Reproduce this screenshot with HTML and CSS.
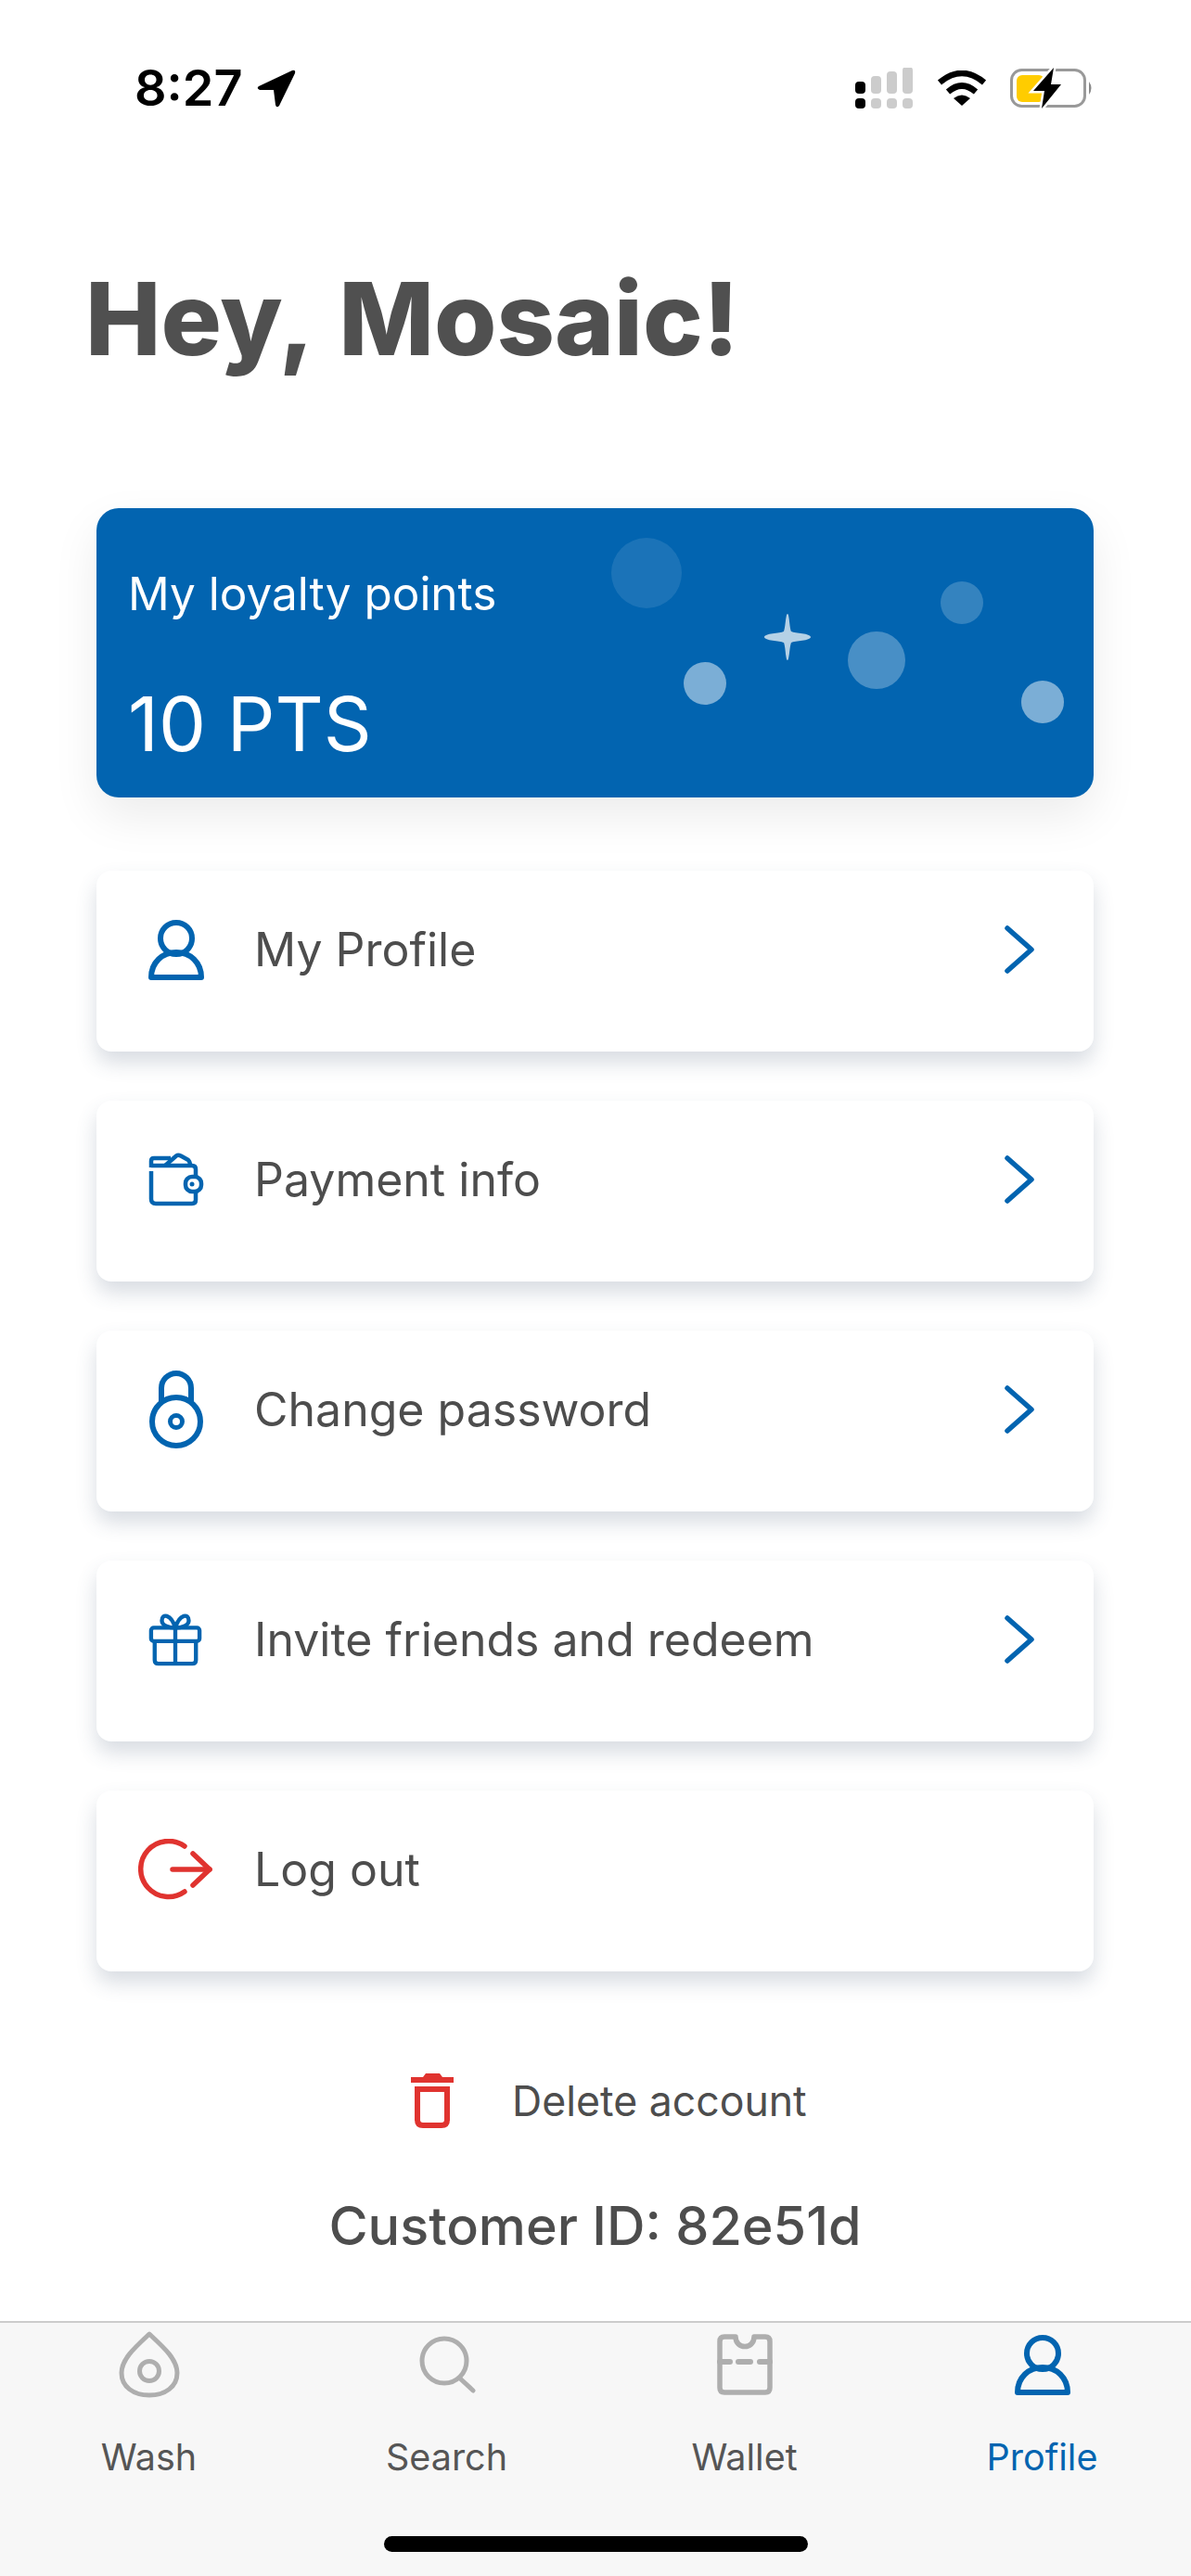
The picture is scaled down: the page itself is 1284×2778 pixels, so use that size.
FILE: index.html
```html
<!DOCTYPE html>
<html lang="en">
<head>
  <meta charset="UTF-8">
  <title>Profile</title>
  <link rel="stylesheet" href="styles.css">
</head>
<body>
  <div class="screen">
    <div class="status-bar">
      <div class="status-left">
        <span class="time">8:27</span>
        <svg class="loc-icon" width="44" height="44" viewBox="0 0 44 44"><path d="M3 20 L39 3 Q43 2 42 6 L25 41 Q22 44 21 40 L19 24 L4 24 Q0 22 3 20 Z" fill="#000"/></svg>
      </div>
      <div class="status-right">
        <svg width="64" height="46" viewBox="0 0 64 46">
          <rect x="1" y="15" width="11" height="13" rx="4" fill="#000"/>
          <rect x="1" y="33" width="11" height="11" rx="4" fill="#000"/>
          <rect x="18" y="9" width="11" height="19" rx="4" fill="#ccc"/>
          <rect x="18" y="33" width="11" height="11" rx="4" fill="#ccc"/>
          <rect x="35" y="4" width="11" height="24" rx="4" fill="#ccc"/>
          <rect x="35" y="33" width="11" height="11" rx="4" fill="#ccc"/>
          <rect x="52" y="-1" width="11" height="29" rx="4" fill="#ccc"/>
          <rect x="52" y="33" width="11" height="11" rx="4" fill="#ccc"/>
        </svg>
        <svg class="wifi-icon" width="54" height="40" viewBox="0 0 54 40" fill="none" stroke="#000" stroke-width="6.500">
          <path d="M3 13 Q27 -7 51 13"/>
          <path d="M12 23 Q27 10 42 23"/>
          <path d="M27 38 L18 30 Q27 23 36 30 Z" fill="#000" stroke="none"/>
        </svg>
        <svg class="battery-icon" width="90" height="46" viewBox="0 0 90 46">
          <rect x="1.500" y="2.500" width="79" height="39" rx="11" fill="none" stroke="#999" stroke-width="3"/>
          <rect x="7" y="8" width="30" height="29" rx="6" fill="#fc0"/>
          <path d="M85 15 Q90 22 85 29 Z" fill="#888"/>
          <path d="M47 0 L25 25 L37 25 L34 44 L55 18 L44 18 Z" fill="#000" stroke="#fff" stroke-width="5" paint-order="stroke"/>
        </svg>
      </div>
    </div>

    <main class="content">
      <h1 class="greeting">Hey, Mosaic!</h1>

      <div class="points-card">
        <svg class="points-art" viewBox="0 0 1075 312">
          <circle cx="593" cy="70" r="38" fill="#fff" fill-opacity="0.1"/>
          <circle cx="656" cy="189" r="23" fill="#fff" fill-opacity="0.48"/>
          <circle cx="841" cy="164" r="31" fill="#fff" fill-opacity="0.28"/>
          <circle cx="933" cy="102" r="23" fill="#fff" fill-opacity="0.2"/>
          <circle cx="1020" cy="209" r="23" fill="#fff" fill-opacity="0.48"/>
          <path d="M745 114 C747 114 747 128 749 133 C753 135 770 135 770 139 C770 143 753 143 749 145 C747 150 747 164 745 164 C743 164 743 150 741 145 C737 143 720 143 720 139 C720 135 737 135 741 133 C743 128 743 114 745 114 Z" fill="#b5d1e6"/>
        </svg>
        <p class="points-label">My loyalty points</p>
        <p class="points-value">10 PTS</p>
      </div>

      <ul class="menu">
        <li class="menu-row">
          <span class="menu-icon">
            <svg width="60" height="66" viewBox="0 0 60 66" fill="none" stroke="#0264b0" stroke-width="6">
              <circle cx="30" cy="21" r="17"/>
              <path d="M3 63 C3 47 15 36 30 36 C45 36 57 47 57 63 Z" stroke-linejoin="round"/>
            </svg>
          </span>
          <span class="menu-text">My Profile</span>
          <svg class="chevron" width="34" height="54" viewBox="0 0 34 54" fill="none" stroke="#0264b0" stroke-width="5.500" stroke-linecap="round" stroke-linejoin="round"><path d="M4 4 L30 27 L4 50"/></svg>
        </li>
        <li class="menu-row">
          <span class="menu-icon">
            <svg width="60" height="58" viewBox="0 0 60 58" fill="none" stroke="#0264b0" stroke-width="4.500" stroke-linejoin="round">
              <path d="M3 20 L3 50 Q3 55 8 55 L47 55 Q51 55 51 51 L51 18 Q51 14 47 14 L3 14"/>
              <path d="M3 16 L3 9 Q3 6 6 6 L24 6"/>
              <path d="M18 14 L30 3.500 Q32 2 35 3.500 L43 8 Q45 10 45 14"/>
              <rect x="40" y="26" width="17" height="16" rx="7" fill="#fff"/>
              <circle cx="47" cy="34" r="2.500" fill="#0264b0" stroke="none"/>
            </svg>
          </span>
          <span class="menu-text">Payment info</span>
          <svg class="chevron" width="34" height="54" viewBox="0 0 34 54" fill="none" stroke="#0264b0" stroke-width="5.500" stroke-linecap="round" stroke-linejoin="round"><path d="M4 4 L30 27 L4 50"/></svg>
        </li>
        <li class="menu-row">
          <span class="menu-icon">
            <svg width="60" height="86" viewBox="0 0 60 86" fill="none" stroke="#0264b0" stroke-width="6">
              <circle cx="30" cy="56" r="26"/>
              <path d="M14 36 L14 20 A16 16 0 0 1 46 20 L46 36"/>
              <circle cx="30" cy="56" r="6.500" stroke-width="5"/>
            </svg>
          </span>
          <span class="menu-text">Change password</span>
          <svg class="chevron" width="34" height="54" viewBox="0 0 34 54" fill="none" stroke="#0264b0" stroke-width="5.500" stroke-linecap="round" stroke-linejoin="round"><path d="M4 4 L30 27 L4 50"/></svg>
        </li>
        <li class="menu-row">
          <span class="menu-icon">
            <svg width="58" height="58" viewBox="0 0 60 60" fill="none" stroke="#0264b0" stroke-width="4.500" stroke-linejoin="round">
              <rect x="3" y="17" width="54" height="15" rx="3"/>
              <path d="M7 32 L7 53 Q7 57 11 57 L49 57 Q53 57 53 53 L53 32"/>
              <path d="M30 17 L30 57"/>
              <path d="M30 17 C24 17 15 15 15 9 C15 1 25 1 30 17 C35 1 45 1 45 9 C45 15 36 17 30 17 Z"/>
            </svg>
          </span>
          <span class="menu-text">Invite friends and redeem</span>
          <svg class="chevron" width="34" height="54" viewBox="0 0 34 54" fill="none" stroke="#0264b0" stroke-width="5.500" stroke-linecap="round" stroke-linejoin="round"><path d="M4 4 L30 27 L4 50"/></svg>
        </li>
        <li class="menu-row">
          <span class="menu-icon">
            <svg class="logout-icon" width="80" height="66" viewBox="0 0 80 66" fill="none" stroke="#e0332f" stroke-width="5.500" stroke-linecap="round" stroke-linejoin="round">
              <path d="M50 8 A30 30 0 1 0 50 57"/>
              <path d="M37 33 L77 33"/>
              <path d="M59 16 L77 33 L59 50"/>
            </svg>
          </span>
          <span class="menu-text">Log out</span>
        </li>
      </ul>

      <div class="delete-row">
        <svg width="46" height="60" viewBox="0 0 46 60" fill="none">
          <path d="M0 4 L13 4 L16 0 L31 0 L34 4 L46 4 L46 10 L0 10 Z" fill="#e0332f"/>
          <path d="M7 17 L39 17 L39 50 Q39 56 33 56 L13 56 Q7 56 7 50 Z" stroke="#e0332f" stroke-width="6"/>
        </svg>
        <span class="delete-text">Delete account</span>
      </div>

      <p class="customer-id">Customer ID: 82e51d</p>
    </main>

    <nav class="tab-bar">
      <div class="tab">
        <svg width="66" height="72" viewBox="0 0 66 72" fill="none" stroke="#aeaeae" stroke-width="5">
          <path d="M33 3 C18 17 3 30 3 45 C3 60 16 69 33 69 C50 69 63 60 63 45 C63 30 48 17 33 3 Z" stroke-linejoin="round"/>
          <circle cx="33" cy="43" r="10.500"/>
        </svg>
        <span class="tab-label">Wash</span>
      </div>
      <div class="tab">
        <svg width="66" height="72" viewBox="0 0 66 72" fill="none" stroke="#aeaeae" stroke-width="5" stroke-linecap="round">
          <circle cx="30" cy="32" r="24"/>
          <path d="M47 51 L61 64"/>
        </svg>
        <span class="tab-label">Search</span>
      </div>
      <div class="tab">
        <svg width="66" height="72" viewBox="-3 -3 66 72" fill="none" stroke="#aeaeae" stroke-width="5.500">
          <path d="M20 3 L8 3 Q3 3 3 8 L3 58 Q3 63 8 63 L52 63 Q57 63 57 58 L57 8 Q57 3 52 3 L40 3 C40 17 20 17 20 3 Z" stroke-linejoin="round"/>
          <path d="M3 30 L14 30 M23 30 L36 30 M46 30 L57 30" stroke-linecap="round" stroke-width="6"/>
        </svg>
        <span class="tab-label">Wallet</span>
      </div>
      <div class="tab tab-active">
        <svg width="66" height="72" viewBox="-3 -3 66 72" fill="none" stroke="#0264b0" stroke-width="6">
          <circle cx="30" cy="21" r="17"/>
          <path d="M3 63 C3 47 15 36 30 36 C45 36 57 47 57 63 Z" stroke-linejoin="round"/>
        </svg>
        <span class="tab-label">Profile</span>
      </div>
      <div class="home-indicator"></div>
    </nav>
  </div>
</body>
</html>
```

FILE: styles.css
```css
/* Profile screen */
body {
  margin: 0;
  background-color: #fff;
  color: #4d4d4d;
  font-family: 'Inter', 'Roboto', sans-serif;
}

p, h1, ul {
  margin: 0;
  padding: 0;
}

.screen {
  height: 2778px;
  display: flex;
  flex-direction: column;
  overflow: hidden;
}

/* Status bar */
.status-bar {
  height: 190px;
  box-sizing: border-box;
  padding: 70px 105px 0 145px;
  display: flex;
  justify-content: space-between;
  align-items: flex-start;
}

.status-left {
  display: flex;
  align-items: center;
  gap: 14px;
}

.time {
  font-size: 54px;
  line-height: 50px;
  font-weight: 600;
  color: #000;
}

.status-right {
  display: flex;
  align-items: center;
  gap: 25px;
  margin-top: 3px;
}

/* Main content */
.content {
  flex: 1;
  display: flex;
  flex-direction: column;
  padding: 0 105px 0 104px;
}

.greeting {
  font-size: 109px;
  line-height: 136px;
  font-weight: 800;
  word-spacing: 7px;
  margin: 85px 0 0 -12px;
  color: #505050;
}

.points-card {
  position: relative;
  height: 312px;
  margin-top: 137px;
  padding: 60px 34px 0;
  box-sizing: border-box;
  background-color: #0264b0;
  border-radius: 24px;
  box-shadow: 0 20px 50px rgba(0, 0, 0, 0.08);
  color: #fff;
}

.points-art {
  position: absolute;
  left: 0;
  top: 0;
  width: 100%;
  height: 100%;
}

.points-label {
  font-size: 49.500px;
  line-height: 64px;
}

.points-value {
  font-size: 81px;
  line-height: 90px;
  margin-top: 64px;
}

.menu {
  list-style: none;
  display: flex;
  flex-direction: column;
  gap: 53px;
  margin-top: 79px;
}

.menu-row {
  height: 195px;
  box-sizing: border-box;
  padding: 0 63px 26px 0;
  display: flex;
  align-items: center;
  background-color: #fff;
  border-radius: 16px;
  box-shadow: 0 12px 22px rgba(60, 80, 110, 0.2);
}

.menu-icon {
  width: 170px;
  flex: none;
  padding-left: 56px;
  box-sizing: border-box;
  display: flex;
  align-items: center;
}

.logout-icon {
  margin-left: -11px;
}

.menu-text {
  flex: 1;
  font-size: 50px;
  color: #4d4d4d;
}

.delete-row {
  display: flex;
  align-items: center;
  gap: 63px;
  margin: 107px 0 0 339px;
}

.delete-text {
  font-size: 44.600px;
  line-height: 66px;
  color: #4d4d4d;
}

.customer-id {
  font-size: 57.500px;
  line-height: 68px;
  font-weight: 500;
  text-align: center;
  margin-top: 67px;
}

/* Bottom tabs */
.tab-bar {
  position: relative;
  height: 275px;
  box-sizing: border-box;
  flex: none;
  display: grid;
  grid-template-columns: repeat(4, 1fr);
  background-color: #f7f7f7;
  border-top: 2px solid #ccc;
}

.tab {
  height: 180px;
  padding-top: 9px;
  display: flex;
  flex-direction: column;
  align-items: center;
}

.tab-label {
  font-size: 39.500px;
  line-height: 46px;
  margin-top: 41px;
  color: #555;
}

.tab-active .tab-label {
  color: #0264b0;
}

.home-indicator {
  position: absolute;
  left: 414px;
  bottom: 26px;
  width: 457px;
  height: 17px;
  border-radius: 9px;
  background-color: #000;
}
```
